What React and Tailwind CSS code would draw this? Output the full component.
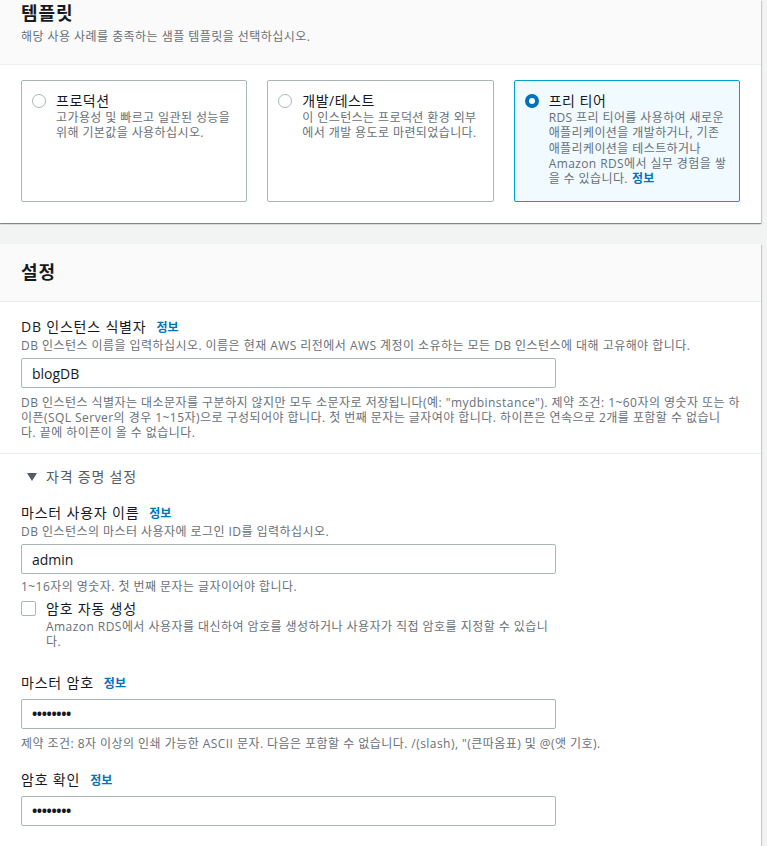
import React from "react";

const font = { fontFamily: '"Open Sans", "Noto Sans CJK KR", sans-serif' };

function Info() {
  return <span className="ml-[10px] text-[12px] font-bold tracking-normal text-[#0073bb]">정보</span>;
}

function Radio({ checked }) {
  return checked ? (
    <span className="mt-[2px] box-border block h-[14px] w-[14px] shrink-0 rounded-full border-[4px] border-[#0073bb] bg-white" />
  ) : (
    <span className="mt-[2px] box-border block h-[14px] w-[14px] shrink-0 rounded-full border-[1.5px] border-[#aab7b8] bg-white" />
  );
}

function Card({ title, lines, checked, info }) {
  return (
    <div
      className={
        "box-border flex h-[122px] gap-[10px] rounded-[2px] border pl-[10px] pr-[2px] pt-[11px] " +
        (checked ? "border-[#00a1c9] bg-[#f1faff]" : "border-[#aab7b8] bg-white")
      }
    >
      <Radio checked={checked} />
      <div className="min-w-0">
        <div className="text-[14px] leading-[18px] tracking-[0.5px] text-[#16191f]">{title}</div>
        <div className="text-[12px] leading-[15.25px] tracking-[0.4px] text-[#687078]">
          {lines.map((l, i) => (
            <div key={i} className="whitespace-nowrap">
              {l}
              {info && i === lines.length - 1 && <span className="ml-1 font-bold text-[#0073bb]">정보</span>}
            </div>
          ))}
        </div>
      </div>
    </div>
  );
}

function Input({ value, dots }) {
  return (
    <div className="box-border flex h-[30px] w-[535px] items-center rounded-[2px] border border-[#aab7b8] bg-white px-[10px]">
      {dots ? (
        <span className="text-[14px] font-bold leading-none tracking-[-0.4px] text-[#16191f]">••••••••</span>
      ) : (
        <span className="text-[14px] text-[#16191f]">{value}</span>
      )}
    </div>
  );
}

const panelShadow =
  "shadow-[0_1px_1px_0_rgba(0,28,36,0.3),1px_1px_1px_0_rgba(0,28,36,0.15),-1px_1px_1px_0_rgba(0,28,36,0.15)]";

const label = "text-[14px] leading-[20px] tracking-[0.8px] text-[#16191f]";
const desc = "text-[12px] tracking-[0.45px] text-[#687078]";

export default function App() {
  return (
    <div className="min-h-[846px] w-[767px] overflow-hidden bg-[#f2f3f3]" style={font}>
      {/* Panel 1 */}
      <div className={"w-[761px] bg-white " + panelShadow}>
        <div className="border-b border-[#eaeded] bg-[#fafafa] px-[21px] pb-[19px] pt-[2px]">
          <div className="text-[18px] font-bold leading-[22px] tracking-[1px] text-[#16191f]">템플릿</div>
          <div className={"mt-[5px] leading-[16px] " + desc}>
            해당 사용 사례를 충족하는 샘플 템플릿을 선택하십시오.
          </div>
        </div>
        <div className="grid grid-cols-3 gap-x-[20px] px-[21px] pb-[21px] pt-[15px]">
          <Card title="프로덕션" lines={["고가용성 및 빠르고 일관된 성능을", "위해 기본값을 사용하십시오."]} />
          <Card title="개발/테스트" lines={["이 인스턴스는 프로덕션 환경 외부", "에서 개발 용도로 마련되었습니다."]} />
          <Card
            checked
            info
            title="프리 티어"
            lines={[
              "RDS 프리 티어를 사용하여 새로운",
              "애플리케이션을 개발하거나, 기존",
              "애플리케이션을 테스트하거나",
              "Amazon RDS에서 실무 경험을 쌓",
              "을 수 있습니다.",
            ]}
          />
        </div>
      </div>

      {/* Panel 2 */}
      <div className={"mt-[21px] w-[761px] bg-white " + panelShadow}>
        <div className="border-b border-[#eaeded] bg-[#fafafa] px-[21px] pb-[18px] pt-[17px]">
          <div className="text-[18px] font-bold leading-[22px] tracking-[1px] text-[#16191f]">설정</div>
        </div>

        <div className="border-b border-[#eaeded] px-[21px] pb-[13px] pt-[15px]">
          <div className={label}>
            DB 인스턴스 식별자
            <Info />
          </div>
          <div className={"leading-[16px] " + desc}>
            DB 인스턴스 이름을 입력하십시오. 이름은 현재 AWS 리전에서 AWS 계정이 소유하는 모든 DB 인스턴스에 대해 고유해야 합니다.
          </div>
          <div className="mt-[4px]">
            <Input value="blogDB" />
          </div>
          <div className={"mt-[7px] leading-[15px] " + desc}>
            <div className="whitespace-nowrap">
              DB 인스턴스 식별자는 대소문자를 구분하지 않지만 모두 소문자로 저장됩니다(예: "mydbinstance"). 제약 조건: 1~60자의 영숫자 또는 하
            </div>
            <div className="whitespace-nowrap">
              이픈(SQL Server의 경우 1~15자)으로 구성되어야 합니다. 첫 번째 문자는 글자여야 합니다. 하이픈은 연속으로 2개를 포함할 수 없습니
            </div>
            <div className="whitespace-nowrap">다. 끝에 하이픈이 올 수 없습니다.</div>
          </div>
        </div>

        <div className="px-[21px] pb-[20px] pt-[13px]">
          <div className="flex items-center gap-[9px] pl-[6px] text-[14px] leading-[20px] tracking-[0.8px] text-[#545b64]">
            <svg width="10" height="8" viewBox="0 0 10 8" className="shrink-0">
              <path d="M0 0 L10 0 L5 8 Z" fill="#545b64" />
            </svg>
            <span>자격 증명 설정</span>
          </div>

          <div className={"mt-[16px] " + label}>
            마스터 사용자 이름
            <Info />
          </div>
          <div className={"leading-[16px] " + desc}>DB 인스턴스의 마스터 사용자에 로그인 ID를 입력하십시오.</div>
          <div className="mt-[4px]">
            <Input value="admin" />
          </div>
          <div className={"mt-[5px] leading-[15px] " + desc}>1~16자의 영숫자. 첫 번째 문자는 글자이어야 합니다.</div>

          <div className="mt-[5px] flex gap-[10px]">
            <span className="mt-[2px] box-border block h-[15px] w-[15px] shrink-0 rounded-[2px] border border-[#aab7b8] bg-white" />
            <div>
              <div className={label}>암호 자동 생성</div>
              <div className={"leading-[15px] " + desc}>
                <div className="whitespace-nowrap">
                  Amazon RDS에서 사용자를 대신하여 암호를 생성하거나 사용자가 직접 암호를 지정할 수 있습니
                </div>
                <div>다.</div>
              </div>
            </div>
          </div>

          <div className={"mt-[24px] " + label}>
            마스터 암호
            <Info />
          </div>
          <div className="mt-[5px]">
            <Input dots />
          </div>
          <div className={"mt-[7px] leading-[15px] " + desc}>
            제약 조건: 8자 이상의 인쇄 가능한 ASCII 문자. 다음은 포함할 수 없습니다. /(slash), "(큰따옴표) 및 @(앳 기호).
          </div>

          <div className={"mt-[19px] " + label}>
            암호 확인
            <Info />
          </div>
          <div className="mt-[5px]">
            <Input dots />
          </div>
        </div>
      </div>
    </div>
  );
}
